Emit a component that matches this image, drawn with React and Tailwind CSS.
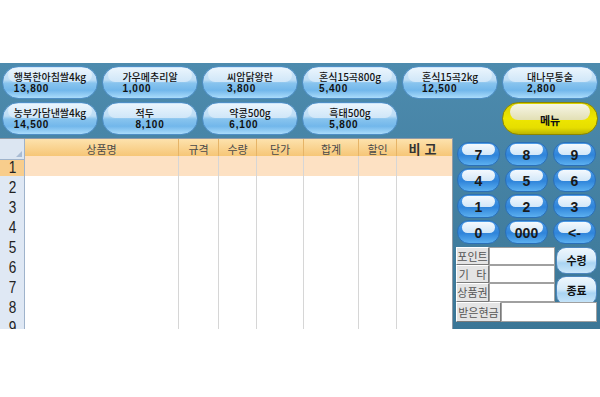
const products = [
  { name: '행복한아침쌀4kg', price: '13,800' },
  { name: '가우메추리알', price: '1,000' },
  { name: '씨암닭왕란', price: '3,800' },
  { name: '혼식15곡800g', price: '5,400' },
  { name: '혼식15곡2kg', price: '12,500' },
  { name: '대나무통술', price: '2,800' },
  { name: '농부가담낸쌀4kg', price: '14,500' },
  { name: '적두', price: '8,100' },
  { name: '약콩500g', price: '6,100' },
  { name: '흑태500g', price: '5,800' },
];

const columns = ['상품명', '규격', '수량', '단가', '합계', '할인'];
const keys = ['7', '8', '9', '4', '5', '6', '1', '2', '3', '0', '000', '<-'];
const rows = [1, 2, 3, 4, 5, 6, 7, 8, 9];

const ProductButton = ({ name, price }) => (
  <button className="relative h-[33px] rounded-full border border-[#4f8fc6] bg-[linear-gradient(to_bottom,#cde6f9_0%,#bcdcf5_42%,#88c4ee_52%,#72b7eb_75%,#aadcfb_100%)] flex items-center justify-center overflow-hidden">
    <span className="absolute left-[5%] right-[5%] top-[1px] h-[46%] rounded-full bg-[linear-gradient(to_bottom,#eaf5fd,#cfe6f8)]" />
    <span className="relative inline-block text-left text-[10px] font-medium text-[#111] pb-[1px]">
      <span className="block whitespace-nowrap leading-[13px]">{name}</span>
      <span className="block leading-[11px] tracking-[0.8px] font-['Liberation_Sans',sans-serif] font-bold">{price}</span>
    </span>
  </button>
);

const MenuButton = () => (
  <button className="relative h-[33px] rounded-full border border-[#8c8600] bg-[linear-gradient(to_bottom,#d8d000_0%,#eee600_50%,#e6de00_80%,#bdb500_100%)] flex items-center justify-center overflow-hidden">
    <span className="absolute left-[7%] right-[7%] top-[1px] h-[50%] rounded-full bg-[linear-gradient(to_bottom,#f7f6e6,#e2dfb4)]" />
    <span className="relative text-[11px] font-bold text-[#111] pt-[3px]">메뉴</span>
  </button>
);

const KeyButton = ({ label }) => (
  <button className="relative h-[24px] rounded-full border border-[#2a6fb8] bg-[linear-gradient(to_bottom,#4f9de6_0%,#2f84da_55%,#5cb0f0_100%)] flex items-center justify-center overflow-hidden">
    <span className="absolute left-[9%] right-[9%] top-[1px] h-[48%] rounded-full bg-[linear-gradient(to_bottom,#f4f9fe,#d2e7f8)]" />
    <span className="relative text-[14px] leading-none font-bold text-[#1a1a1a] font-['Liberation_Sans',sans-serif] pt-[2px]">
      {label}
    </span>
  </button>
);

const FormLabel = ({ children, wide }) => (
  <div
    className={`${wide ? 'w-[45px]' : 'w-[33px]'} h-full flex items-center justify-center bg-[#e4e4e4] border border-t-white border-l-white border-r-[#7a7a7a] border-b-[#7a7a7a] text-[11px] text-[#555] whitespace-pre`}
  >
    {children}
  </div>
);

const SideButton = ({ label, tall }) => (
  <button
    className={`${tall ? 'h-[29px]' : 'h-[27px]'} w-[41px] rounded-[10px] border border-[#4d86bd] bg-[linear-gradient(to_bottom,#eef7fd_0%,#d6ebfa_45%,#a9d4f3_60%,#cbe7fa_100%)] flex items-center justify-center text-[11px] font-bold text-[#111]`}
  >
    {label}
  </button>
);

export default function App() {
  return (
    <div className="w-[600px] h-[397px] bg-white font-['Noto_Sans_CJK_KR',sans-serif] overflow-hidden">
      <div className="h-[63px]" />
      <div className="h-[266px] bg-[linear-gradient(to_bottom,#4d8bae,#3b7696)] flex flex-col overflow-hidden">
        {/* product buttons */}
        <div className="grid grid-cols-6 gap-x-[4px] gap-y-[3px] pt-[3px] px-[2px]">
          {products.map((p) => (
            <ProductButton key={p.name} {...p} />
          ))}
          <div />
          <MenuButton />
        </div>

        <div className="flex mt-[3px] flex-1 min-h-0">
          {/* sales grid */}
          <div className="w-[453px] bg-white border-t border-r border-[#8f9aa6] overflow-hidden">
            <div className="grid grid-cols-[25px_154px_40px_38px_47px_55px_38px_55px] h-[17px]">
              <div className="relative bg-[#dce6f2] border-r border-b border-[#9fb3cb]">
                <span className="absolute right-[2px] bottom-[2px] w-0 h-0 border-l-[6px] border-l-transparent border-b-[6px] border-b-[#a9bcd4]" />
              </div>
              {columns.map((c) => (
                <div
                  key={c}
                  className="flex items-center justify-center bg-[linear-gradient(to_bottom,#fde2ad,#f5c16d)] border-r border-b border-[#e6b467] text-[11px] text-[#4a4a4a]"
                >
                  {c}
                </div>
              ))}
              <div className="flex items-center justify-center bg-[linear-gradient(to_bottom,#fde2ad,#f5c16d)] border-b border-[#e6b467] text-[13px] font-semibold text-[#333] tracking-[4px]">
                비고
              </div>
            </div>
            {rows.map((r) => (
              <div key={r} className="grid grid-cols-[25px_154px_40px_38px_47px_55px_38px_55px] h-[20px]">
                <div
                  className={`${r === 1 ? 'bg-[#f8cd8c]' : 'bg-[#dfe8f4]'} border-r border-[#9fb3cb] border-b border-b-[#c6d3e2] flex items-center justify-center text-[16px] text-[#222] font-['Liberation_Sans',sans-serif]`}
                >
                  <span className="inline-block scale-x-[0.85]">{r}</span>
                </div>
                {[0, 1, 2, 3, 4, 5, 6].map((i) => (
                  <div
                    key={i}
                    className={`${r === 1 ? 'bg-[#fde1c3]' : 'bg-white'} ${i < 6 ? 'border-r' : ''} border-b border-[#d6d6d6]`}
                  />
                ))}
              </div>
            ))}
          </div>

          {/* right panel */}
          <div className="flex-1 flex flex-col">
            <div className="grid grid-cols-3 gap-x-[5px] gap-y-[2px] pl-[4px] pr-[4px] pt-[4px]">
              {keys.map((k) => (
                <KeyButton key={k} label={k} />
              ))}
            </div>
            <div className="flex flex-col pl-[3px] pr-[3px] mt-[3px]">
              <div className="flex">
                <div className="flex flex-col">
                  {[
                    ['포인트', 'h-[18px]'],
                    ['기   타', 'h-[18px]'],
                    ['상품권', 'h-[19px]'],
                  ].map(([label, h]) => (
                    <div key={label} className={`flex ${h}`}>
                      <FormLabel>{label}</FormLabel>
                      <div className="w-[66px] h-full bg-white border border-[#a0a0a0]" />
                    </div>
                  ))}
                </div>
                <div className="flex flex-col gap-[2px] ml-[1px]">
                  <SideButton label="수령" />
                  <SideButton label="종료" tall />
                </div>
              </div>
              <div className="flex h-[20px] -mt-[3px]">
                <FormLabel wide>받은현금</FormLabel>
                <div className="w-[96px] h-full bg-white border border-[#a0a0a0]" />
              </div>
            </div>
          </div>
        </div>
      </div>
    </div>
  );
}
